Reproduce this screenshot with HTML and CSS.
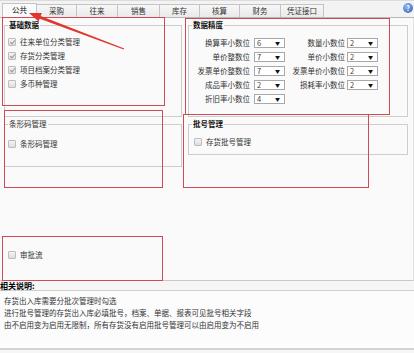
FILE: index.html
```html
<!DOCTYPE html>
<html lang="zh-CN">
<head>
    <meta charset="UTF-8">
    <meta name="viewport" content="width=device-width, initial-scale=1.0">
    <title>选项设置</title>
    <link rel="stylesheet" href="styles.css">
</head>
<body>
    <div class="tabbar">
        <div class="tab active">公共</div>
        <div class="tab">采购</div>
        <div class="tab">往来</div>
        <div class="tab">销售</div>
        <div class="tab">库存</div>
        <div class="tab">核算</div>
        <div class="tab">财务</div>
        <div class="tab">凭证接口</div>
        <span class="help">?</span>
    </div>

    <div class="panel">
        <div class="row row-top">
            <fieldset class="group g-base">
                <legend>基础数据</legend>
                <div class="check"><span class="cb on"></span>往来单位分类管理</div>
                <div class="check"><span class="cb on"></span>存货分类管理</div>
                <div class="check"><span class="cb on"></span>项目档案分类管理</div>
                <div class="check"><span class="cb"></span>多币种管理</div>
            </fieldset>
            <fieldset class="group g-prec">
                <legend>数据精度</legend>
                <div class="prec-row">
                    <span class="lbl a">换算率小数位</span><span class="sel">6</span>
                    <span class="lbl b">数量小数位</span><span class="sel">2</span>
                </div>
                <div class="prec-row">
                    <span class="lbl a">单价整数位</span><span class="sel">7</span>
                    <span class="lbl b">单价小数位</span><span class="sel">2</span>
                </div>
                <div class="prec-row">
                    <span class="lbl a">发票单价整数位</span><span class="sel">7</span>
                    <span class="lbl b">发票单价小数位</span><span class="sel">2</span>
                </div>
                <div class="prec-row">
                    <span class="lbl a">成品率小数位</span><span class="sel">2</span>
                    <span class="lbl b">损耗率小数位</span><span class="sel">2</span>
                </div>
                <div class="prec-row">
                    <span class="lbl a">折旧率小数位</span><span class="sel">4</span>
                </div>
            </fieldset>
        </div>

        <div class="row row-mid">
            <fieldset class="group g-bar">
                <legend class="plain">条形码管理</legend>
                <div class="check"><span class="cb"></span>条形码管理</div>
            </fieldset>
            <fieldset class="group g-batch">
                <legend>批号管理</legend>
                <div class="check"><span class="cb"></span>存货批号管理</div>
            </fieldset>
        </div>

        <div class="check approve"><span class="cb"></span>审批流</div>
    </div>

    <div class="notes">
        <div class="notes-title">相关说明:</div>
        <div class="notes-body">
            <p>存货出入库需要分批次管理时勾选</p>
            <p>进行批号管理的存货出入库必填批号，档案、单据、报表可见批号相关字段</p>
            <p>由不启用变为启用无限制，所有存货没有启用批号管理可以由启用变为不启用</p>
        </div>
    </div>

    <!-- red markup drawn over the screenshot -->
    <div class="mark m1"></div>
    <div class="mark m2"></div>
    <div class="mark m3"></div>
    <div class="mark m4"></div>
    <div class="mark m5"></div>
    <svg class="arrow" width="414" height="60" viewBox="0 0 414 60">
        <polygon points="29,13 41.8,13 40.7,15.9 124.2,48.5 123.8,49.6 39.7,18.7 38.6,21.5" fill="#e2352b"></polygon>
    </svg>
</body>
</html>
```

FILE: styles.css
```css
body {
    margin: 0;
    width: 414px;
    height: 353px;
    position: relative;
    overflow: hidden;
    background-color: #f6f6f7;
    color: #333;
    font-family: "Noto Sans CJK SC", "Noto Sans", sans-serif;
    font-size: 7.5px;
    line-height: 10px;
}

/* Tabs */
.tabbar {
    display: flex;
    align-items: flex-end;
    height: 18px;
    padding-left: 2px;
    border-top: 1px solid #dcdcdc;
    border-bottom: 1px solid #b8b8b8;
    background-color: #f3f3f3;
    box-sizing: border-box;
}

.tab {
    height: 13px;
    line-height: 12px;
    width: 40px;
    text-align: center;
    box-sizing: border-box;
    border: 1px solid #c4c4c4;
    border-bottom: none;
    border-left: none;
    background: linear-gradient(#f7f7f7, #e9e9e9);
    color: #333;
}

.tab:nth-child(1) { width: 35px; border-left: 1px solid #c4c4c4; }
.tab:nth-child(3) { width: 41px; }
.tab:nth-child(4) { width: 42px; }
.tab:nth-child(7) { width: 41px; }
.tab:nth-child(8) { width: 43px; }

.tab.active {
    height: 15px;
    margin-bottom: -1px;
    background: #fafafa;
    color: #111;
}

.help {
    margin-left: auto;
    margin-right: 1px;
    align-self: flex-start;
    margin-top: 2px;
    width: 10px;
    height: 10px;
    border-radius: 50%;
    background: radial-gradient(circle at 35% 30%, #8fb4ef, #2f62b8);
    color: #fff;
    font-size: 7px;
    line-height: 10px;
    text-align: center;
    font-weight: bold;
}

/* Main panel */
.panel {
    height: 263px;
    box-sizing: border-box;
    padding: 2px 0 0 4px;
    background-color: #fafafa;
    border-right: 1px solid #e2e2e2;
    border-bottom: 1px solid #c9c9c9;
}

.row {
    display: grid;
    grid-template-columns: 178px 220px;
    column-gap: 6px;
}

.row-mid {
    margin-top: 2px;
    align-items: start;
}

.group {
    margin: 0;
    min-width: 0;
    border: 1px solid #cdcdcd;
    padding: 0 0 0 3px;
}

.group legend {
    padding: 0 1px;
    font-weight: bold;
    color: #111;
    line-height: 10px;
}

.group legend.plain {
    font-weight: normal;
    color: #333;
}

.g-base { padding-top: 5px; }
.g-prec { padding: 6px 0 10px 0; }
.g-prec legend { margin-left: 3px; }
.g-bar { padding-top: 8px; padding-bottom: 15px; }
.g-batch { padding: 6px 0 5px 5px; }
.g-batch legend { margin-left: -2px; }

.check {
    display: flex;
    align-items: center;
    height: 14px;
}

.cb {
    width: 8px;
    height: 8px;
    box-sizing: border-box;
    margin-right: 4px;
    border: 1px solid #bdbdbd;
    border-radius: 1px;
    background: linear-gradient(#f4f4f4, #dedede);
    position: relative;
}

.cb.on::after {
    content: "";
    position: absolute;
    left: 2px;
    top: 0px;
    width: 2px;
    height: 4px;
    border-right: 1px solid #9a9a9a;
    border-bottom: 1px solid #9a9a9a;
    transform: rotate(40deg);
}

.approve {
    margin-top: 81px;
    margin-left: 4px;
}

/* Precision rows */
.prec-row {
    display: flex;
    align-items: center;
    height: 14px;
}

.lbl {
    text-align: right;
    white-space: nowrap;
}

.lbl.a { width: 61px; margin-right: 4px; }
.lbl.b { width: 60px; margin-right: 2px; }

.sel {
    width: 31px;
    height: 10px;
    box-sizing: border-box;
    border: 1px solid #a8a8a8;
    background-color: #fff;
    padding-left: 2px;
    line-height: 8px;
    position: relative;
    color: #444;
}

.sel::after {
    content: "▼";
    position: absolute;
    right: 4px;
    top: 0;
    font-size: 5px;
    color: #111;
}

/* Notes */
.notes-title {
    height: 9px;
    line-height: 9px;
    font-size: 8px;
    font-weight: bold;
    color: #000;
}

.notes-body {
    height: 60px;
    box-sizing: border-box;
    padding: 4px 0 0 4px;
    background-color: #fcfcfd;
    border-top: 1px solid #cfcfcf;
    border-bottom: 2px solid #d4d4d4;
}

.notes-body p {
    margin: 0;
    line-height: 12px;
    color: #333;
}

/* Red annotations */
.mark {
    position: absolute;
    border: 1px solid #cf4b53;
    box-sizing: border-box;
}

.m1 { left: 2px; top: 17px; width: 163px; height: 89px; }
.m2 { left: 185px; top: 18px; width: 205px; height: 97px; }
.m3 { left: 4px; top: 110px; width: 159px; height: 78px; }
.m4 { left: 183px; top: 114px; width: 186px; height: 74px; }
.m5 { left: 2px; top: 236px; width: 161px; height: 45px; }

.arrow {
    position: absolute;
    left: 0;
    top: 0;
}
```
